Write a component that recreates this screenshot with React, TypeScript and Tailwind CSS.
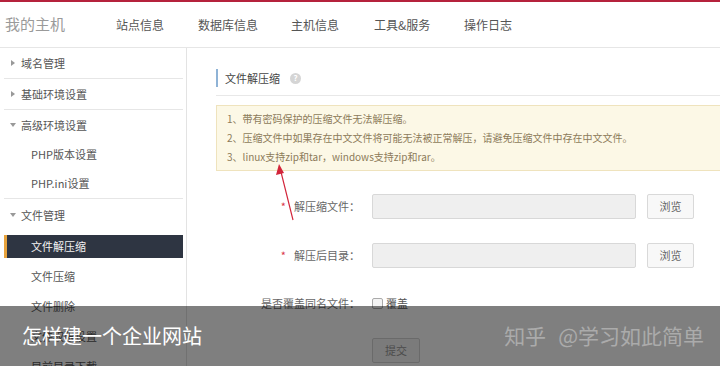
const NAV = [
  { label: '站点信息', w: 'w-[82px]' },
  { label: '数据库信息', w: 'w-[93px]' },
  { label: '主机信息', w: 'w-[83px]' },
  { label: '工具&服务', w: 'w-[90px]' },
  { label: '操作日志', w: 'w-[90px]' },
]

const FONT = { fontFamily: '"Noto Sans CJK SC", "Noto Sans", sans-serif' }

function Caret({ open }: { open?: boolean }) {
  return open ? (
    <span className="mr-[5px] inline-block h-0 w-0 border-x-[3px] border-t-[4px] border-x-transparent border-t-[#999]" />
  ) : (
    <span className="mr-[6px] inline-block h-0 w-0 border-y-[3px] border-l-[4px] border-y-transparent border-l-[#999]" />
  )
}

function Sidebar() {
  return (
    <aside className="w-[187px] shrink-0 border-r border-[#e3e3e3] pl-[4px] pr-[3px] text-[11px] text-[#555]">
      <div className="flex h-[31px] items-center border-b border-[#e6e6e6] pl-[7px]">
        <Caret />
        域名管理
      </div>
      <div className="flex h-[31px] items-center border-b border-[#e6e6e6] pl-[7px]">
        <Caret />
        基础环境设置
      </div>
      <div className="border-b border-[#e6e6e6]">
        <div className="flex h-[30px] items-center pl-[6px]">
          <Caret open />
          高级环境设置
        </div>
        <div className="flex h-[29px] items-center pl-[27px]">PHP版本设置</div>
        <div className="flex h-[29px] items-center pl-[27px]">PHP.ini设置</div>
      </div>
      <div>
        <div className="flex h-[32px] items-center pl-[6px]">
          <Caret open />
          文件管理
        </div>
        <div className="flex h-[30px] items-center">
          <div className="flex h-[23px] w-full items-center border-l-[3px] border-[#e8a33c] bg-[#2e3542] pl-[24px] text-[#f2f2f2]">
            文件解压缩
          </div>
        </div>
        <div className="flex h-[30px] items-center pl-[27px]">文件压缩</div>
        <div className="flex h-[30px] items-center pl-[27px]">文件删除</div>
        <div className="flex h-[30px] items-center pl-[27px]">文件权限设置</div>
        <div className="flex h-[30px] items-center pl-[27px]">目前目录下载</div>
      </div>
    </aside>
  )
}

function FieldRow({ label, star }: { label: string; star?: boolean }) {
  return (
    <div className="flex h-[25px] items-center">
      <div className="flex w-[146px] items-center justify-end pr-[2px] text-[11px] text-[#666]">
        {star && <span className="mr-[8px] text-[11px] text-[#d9344a]">*</span>}
        {label}
      </div>
      <div className="ml-[10px] h-[25px] w-[264px] rounded-[2px] border border-[#d8d8d8] bg-[#efefef]" />
      <button className="ml-[11px] h-[25px] w-[47px] rounded-[2px] border border-[#d9d9d9] bg-[#f8f8f8] text-[11px] text-[#666]">
        浏览
      </button>
    </div>
  )
}

export default function App() {
  return (
    <div className="relative h-[366px] w-[720px] overflow-hidden bg-white" style={FONT}>
      <div className="h-[2px] bg-[#b5223c]" />
      <header className="flex h-[46px] items-center border-b border-[#e6e6e6] pl-[5px]">
        <div className="w-[111px] text-[15px] text-[#9a9a9a]">我的主机</div>
        {NAV.map((n) => (
          <div key={n.label} className={`${n.w} text-[12px] text-[#555]`}>
            {n.label}
          </div>
        ))}
      </header>
      <div className="flex">
        <Sidebar />
        <main className="relative flex-1 pl-[29px]">
          <div className="mt-[21px] flex h-[18px] items-center border-l-2 border-[#8fb3d6] pl-[7px] text-[11px] text-[#444]">
            文件解压缩
            <span className="ml-[10px] flex h-[11px] w-[11px] items-center justify-center rounded-full bg-[#d5d5d5] text-[8px] font-bold text-white">
              ?
            </span>
          </div>
          <div className="mt-[8px] border-b border-[#e8e8e8]" />
          <div className="mt-[9px] w-[520px] border border-[#efe3bd] bg-[#fcf8e6] pb-[4px] pl-[10px] pt-[3px] text-[10px] leading-[19px] text-[#8c7b5a]">
            <div>1、带有密码保护的压缩文件无法解压缩。</div>
            <div>2、压缩文件中如果存在中文文件将可能无法被正常解压，请避免压缩文件中存在中文文件。</div>
            <div>3、linux支持zip和tar，windows支持zip和rar。</div>
          </div>
          <div className="mt-[23px] flex flex-col gap-[24px]">
            <FieldRow label="解压缩文件：" star />
            <FieldRow label="解压后目录：" star />
          </div>
          <div className="mt-[25px] flex h-[20px] items-center">
            <div className="w-[146px] pr-[2px] text-right text-[11px] text-[#666]">是否覆盖同名文件：</div>
            <span className="ml-[10px] h-[11px] w-[11px] rounded-[2px] border border-[#aaa] bg-[#f4f4f4]" />
            <span className="ml-[3px] text-[11px] text-[#555]">覆盖</span>
          </div>
          <button className="ml-[156px] mt-[25px] h-[25px] w-[48px] rounded-[2px] border border-[#d5d5d5] bg-[#f6f6f6] text-[11px] text-[#999]">
            提交
          </button>
          <svg className="absolute left-[76px] top-[110px]" width="40" height="80" viewBox="0 0 40 80">
            <line x1="30" y1="62" x2="18" y2="14" stroke="#d2253a" strokeWidth="1.2" />
            <polygon points="16,6 13,17 21,15" fill="#d2253a" />
          </svg>
        </main>
      </div>
      <div className="absolute inset-x-0 bottom-0 top-[306px] flex items-center justify-between bg-black/50 pl-[22px] pr-[16px]">
        <span className="text-[20px] text-white">怎样建一个企业网站</span>
        <span className="text-[21px] text-white/35">
          知乎<span className="ml-[12px]">@学习如此简单</span>
        </span>
      </div>
    </div>
  )
}
